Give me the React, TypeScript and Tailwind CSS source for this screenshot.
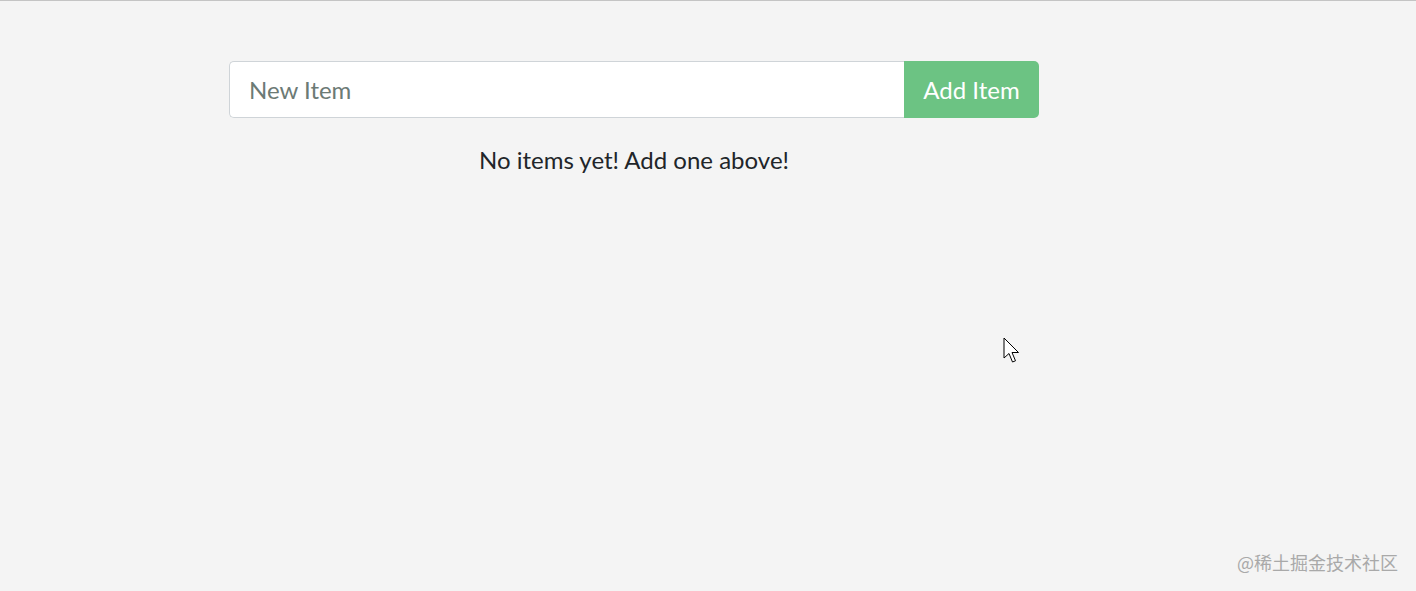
import React from "react";

export default function App() {
  return (
    <div className="relative w-[1416px] h-[591px] bg-[#f4f4f4] border-t border-[#c4c4c4] overflow-hidden" style={{ fontFamily: "Lato, 'Noto Sans', sans-serif" }}>
      <div className="w-[810px] ml-[229px] pt-[60px] flex flex-col">
        <div className="flex h-[57px]">
          <input
            className="flex-1 h-full bg-white border border-[#cfd4d8] border-r-0 rounded-l-[5px] px-[19px] text-[24px] text-[#212529] placeholder:text-[#6c7a75] outline-none"
            placeholder="New Item"
          />
          <button className="w-[135px] h-full bg-[#6cc383] text-white text-[24px] rounded-r-[5px]">Add Item</button>
        </div>
        <p className="mt-[26px] text-center text-[24px] text-[#212529] leading-[32px]">No items yet! Add one above!</p>
      </div>
      <div className="absolute left-[1003px] top-[336px]">
        <svg width="20" height="29" viewBox="0 0 20 29">
          <path d="M1 1 L1 21 L6 16.5 L9.5 25 L12.5 23.8 L9 15.5 L15.5 15.5 Z" fill="white" stroke="black" strokeWidth="1" strokeLinejoin="miter" />
        </svg>
      </div>
      <div className="absolute right-[18px] bottom-[15px] text-[18px] text-[#a9a9a9]" style={{ fontFamily: "'Noto Sans CJK SC', 'Noto Sans', sans-serif" }}>@稀土掘金技术社区</div>
    </div>
  );
}
